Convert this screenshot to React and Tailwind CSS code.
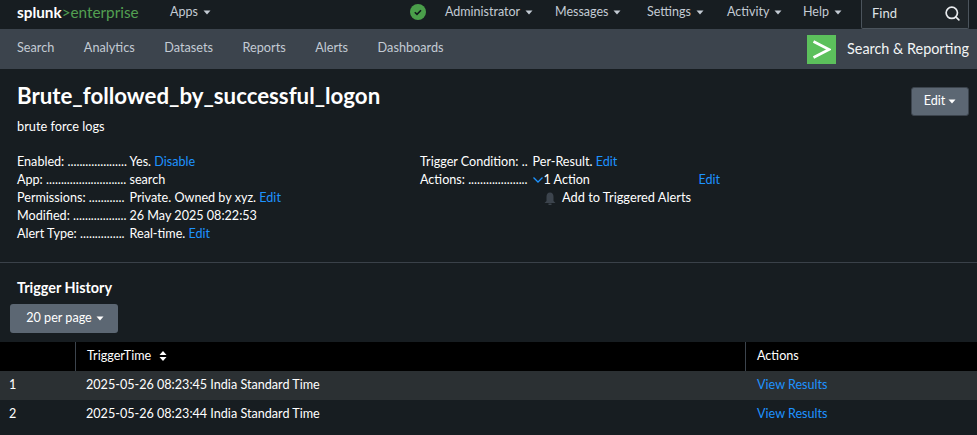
import React from "react"
import { Search } from "lucide-react"

const font = "font-['Lato','Noto_Sans',sans-serif]"

const Caret = ({ className = "" }) => (
  <svg width="8" height="5" viewBox="0 0 8 5" className={className}>
    <path d="M0.5 0.5h7L4 4.5z" fill="currentColor" />
  </svg>
)

const TopItem = ({ label, width }) => (
  <a className={`flex shrink-0 items-center gap-[5px] text-[12.5px] text-[#c3cbd4] ${width}`}>
    {label}
    <Caret />
  </a>
)

const Meta = ({ label, dots, children }) => (
  <div className="flex h-[18px] items-center">
    <div className="w-[112.5px] shrink-0 whitespace-nowrap">
      {label} {".".repeat(dots)}
    </div>
    <div className="whitespace-nowrap">{children}</div>
  </div>
)

const Link = ({ children }) => <a className="text-[#1e93ff]">{children}</a>

const App = () => {
  return (
    <div className={`${font} h-[435px] w-[977px] overflow-hidden bg-[#171d21] text-[12.6px] text-white`}>
      <header className="flex h-[29px] items-center pl-[17px] pr-[8px]">
        <div className="flex w-[153px] shrink-0 items-center pb-[3px] text-[15.3px] leading-none whitespace-nowrap">
          <span className="font-bold">splunk</span>
          <span className="text-[#53a051]">&gt;enterprise</span>
        </div>
        <div className="flex w-[240px] shrink-0 pb-[5px]">
          <TopItem label="Apps" width="w-[60px]" />
        </div>
        <svg width="16" height="16" viewBox="0 0 16 16" className="mb-[5px] shrink-0">
          <circle cx="8" cy="8" r="8" fill="#4a9e4a" />
          <path d="M4.8 8.2l2.2 2.2 4-4.2" fill="none" stroke="#10181c" strokeWidth="1.6" />
        </svg>
        <div className="ml-[19px] flex pb-[5px]">
          <TopItem label="Administrator" width="w-[110px]" />
          <TopItem label="Messages" width="w-[92px]" />
          <TopItem label="Settings" width="w-[80px]" />
          <TopItem label="Activity" width="w-[76px]" />
          <TopItem label="Help" width="w-[58px]" />
        </div>
        <div className="flex h-[29px] w-[108px] shrink-0 items-center justify-between rounded-b-[2px] border border-t-0 border-[#4b545c] bg-[#1f2529] pl-[10px] pr-[7px] pb-[1px] text-[13px] text-[#dfe3e6]">
          Find
          <Search size={17} strokeWidth={2.4} color="#e8ebee" />
        </div>
      </header>

      <nav className="flex h-[40px] items-center justify-between bg-[#3c444d] pl-[17px] pr-[8px]">
        <div className="flex gap-[29.5px] pb-[2px] text-[12.7px] text-[#c3cbd4]">
          <a>Search</a>
          <a>Analytics</a>
          <a>Datasets</a>
          <a>Reports</a>
          <a>Alerts</a>
          <a>Dashboards</a>
        </div>
        <div className="flex items-center gap-[11px]">
          <div className="flex h-[29px] w-[29px] items-center justify-center bg-[#5cc05c]">
            <svg width="19" height="19" viewBox="0 0 19 19">
              <path d="M1.5 1.5L17 9.5L1.5 17.5" fill="none" stroke="#fff" strokeWidth="2.6" />
            </svg>
          </div>
          <span className="text-[14.4px] text-[#f2f4f5]">Search &amp; Reporting</span>
        </div>
      </nav>

      <section className="relative h-[194px] border-b border-[#3a4149] pl-[17px] pr-[8px]">
        <button className="absolute right-[8px] top-[18px] flex h-[29px] w-[58px] items-center justify-center gap-[3px] rounded-[3px] border border-[#3c444d] bg-[#5c6773] text-[12.6px]">
          Edit
          <Caret />
        </button>
        <h1 className="pt-[12px] text-[22.25px] font-bold leading-[30px]">Brute_followed_by_successful_logon</h1>
        <p className="mt-[6px] text-[12.75px] leading-[18px]">brute force logs</p>
        <div className="mt-[18px] flex">
          <div className="w-[403px]">
            <Meta label="Enabled:" dots={20}>
              Yes. <Link>Disable</Link>
            </Meta>
            <Meta label="App:" dots={27}>search</Meta>
            <Meta label="Permissions:" dots={12}>
              Private. Owned by xyz. <Link>Edit</Link>
            </Meta>
            <Meta label="Modified:" dots={18}>26 May 2025 08:22:53</Meta>
            <Meta label="Alert Type:" dots={15}>
              Real-time. <Link>Edit</Link>
            </Meta>
          </div>
          <div>
            <Meta label="Trigger Condition:" dots={2}>
              Per-Result. <Link>Edit</Link>
            </Meta>
            <div className="flex h-[18px] items-center">
              <div className="w-[112.5px] shrink-0 whitespace-nowrap">
                Actions: {".".repeat(20)}
              </div>
              <svg width="10" height="6" viewBox="0 0 10 6" className="shrink-0">
                <path d="M0.5 0.5L5 5L9.5 0.5" fill="none" stroke="#1e93ff" strokeWidth="1.3" />
              </svg>
              <span className="ml-px w-[155px]">1 Action</span>
              <Link>Edit</Link>
            </div>
            <div className="flex h-[18px] items-center pl-[124px]">
              <svg width="12" height="13" viewBox="0 0 12 13" className="mr-[6px]">
                <path d="M6 0.5c2.4 0 3.5 2 3.5 4.2V9l2 2H.5l2-2V4.700C2.500 2.500 3.600 .5 6 .5zM4.500 11.500h3V13h-3z" fill="#3c444d" />
              </svg>
              <span className="text-[12.8px]">Add to Triggered Alerts</span>
            </div>
          </div>
        </div>
      </section>

      <section>
        <h2 className="pl-[17px] pt-[15px] text-[14.4px] font-bold leading-[20px]">Trigger History</h2>
        <button className="ml-[10px] mt-[6px] flex h-[29px] w-[108px] items-center justify-center gap-[4px] rounded-[3px] bg-[#5c6773] pl-[2px] text-[12.6px]">
          20 per page
          <Caret />
        </button>
        <div className="mt-[9px] grid grid-cols-[76px_670px_231px]">
          <div className="h-[29px] border-r border-[#3c444d] bg-black" />
          <div className="flex h-[29px] items-center gap-[8px] border-r border-[#3c444d] bg-black pb-[1px] pl-[11px]">
            TriggerTime
            <svg width="8" height="10" viewBox="0 0 8 10">
              <path d="M4 0l3.500 4h-7zM4 10l3.500-4h-7z" fill="#fff" />
            </svg>
          </div>
          <div className="flex h-[29px] items-center bg-black pb-[1px] pl-[11px]">Actions</div>

          <div className="flex h-[29px] items-center bg-[#2b3033] pb-[1px] pl-[9px]">1</div>
          <div className="flex h-[29px] items-center bg-[#2b3033] pb-[1px] pl-[10px]">2025-05-26 08:23:45 India Standard Time</div>
          <div className="flex h-[29px] items-center bg-[#2b3033] pb-[1px] pl-[11px]"><Link>View Results</Link></div>

          <div className="flex h-[29px] items-center pb-[1px] pl-[9px]">2</div>
          <div className="flex h-[29px] items-center pb-[1px] pl-[10px]">2025-05-26 08:23:44 India Standard Time</div>
          <div className="flex h-[29px] items-center pb-[1px] pl-[11px]"><Link>View Results</Link></div>
        </div>
      </section>
    </div>
  )
}

export default App
